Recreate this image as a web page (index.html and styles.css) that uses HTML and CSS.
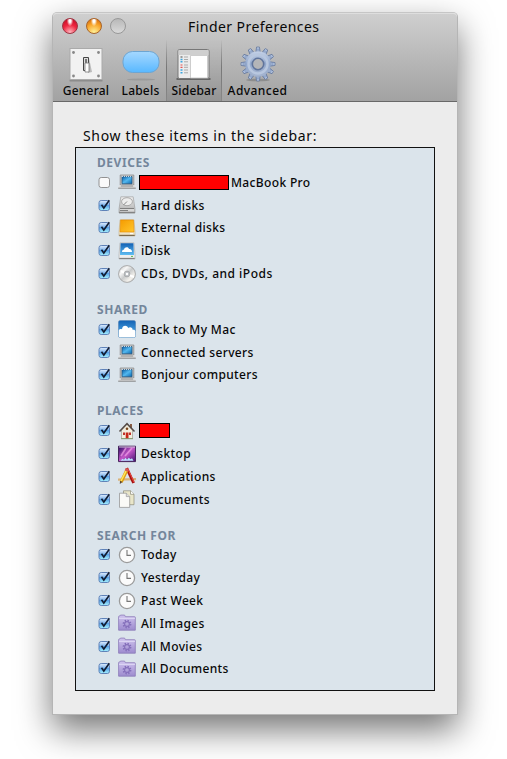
FILE: index.html
```html
<!DOCTYPE html>
<html lang="en">
<head>
<meta charset="utf-8">
<title>Finder Preferences</title>
<link rel="stylesheet" href="styles.css">
</head>
<body>
<svg class="defs" width="0" height="0" aria-hidden="true">
  <defs>
    <linearGradient id="gBox" x2="0" y2="1"><stop offset="0" stop-color="#e3efff"/><stop offset=".42" stop-color="#87b9ed"/><stop offset=".5" stop-color="#58a2e8"/><stop offset="1" stop-color="#a8f4ff"/></linearGradient>
    <linearGradient id="gScreen" x2="1" y2="1"><stop offset="0" stop-color="#075ca5"/><stop offset=".5" stop-color="#53b8ef"/><stop offset="1" stop-color="#0866ad"/></linearGradient>
    <linearGradient id="gMetal" x2="0" y2="1"><stop offset="0" stop-color="#eee"/><stop offset="1" stop-color="#aaa"/></linearGradient>
    <linearGradient id="gGold" x2="1" y2="1"><stop offset="0" stop-color="#f59b00"/><stop offset="1" stop-color="#ffc62c"/></linearGradient>
    <linearGradient id="gSky" x2="0" y2="1"><stop offset="0" stop-color="#1261b4"/><stop offset="1" stop-color="#60bdf2"/></linearGradient>
    <linearGradient id="gDisc" x2="1" y2="1"><stop offset="0" stop-color="#bbb"/><stop offset=".3" stop-color="#f7f7f7"/><stop offset=".5" stop-color="#c9cbcc"/><stop offset=".75" stop-color="#f5f3ee"/><stop offset="1" stop-color="#aaa"/></linearGradient>
    <linearGradient id="gDesk" x2="1" y2="1"><stop offset="0" stop-color="#26045f"/><stop offset=".5" stop-color="#c557c9"/><stop offset="1" stop-color="#41106f"/></linearGradient>
    <linearGradient id="gFolder" x2="0" y2="1"><stop offset="0" stop-color="#cfc3ee"/><stop offset="1" stop-color="#9d8bce"/></linearGradient>
    <linearGradient id="gLabel" x2="0" y2="1"><stop offset="0" stop-color="#a5d8ff"/><stop offset=".5" stop-color="#80c8ff"/><stop offset="1" stop-color="#58b8ff"/></linearGradient>
    <linearGradient id="gGear" x2="0" y2="1"><stop offset="0" stop-color="#c5d2e8"/><stop offset=".5" stop-color="#91a7cc"/><stop offset="1" stop-color="#a6b5cf"/></linearGradient>
    <symbol id="off" viewBox="0 0 13 13"><rect x="1" y="1.5" width="10.5" height="10" rx="2.2" fill="#fafafa" stroke="#929292"/></symbol>
    <symbol id="on" viewBox="0 0 13 13"><rect x="1" y="1.5" width="10.5" height="10" rx="2.2" fill="url(#gBox)" stroke="#5f82b8"/><path d="M3.5 5.8 5.8 9 11.3 1.2" fill="none" stroke="#111c32" stroke-width="1.6"/></symbol>
    <symbol id="laptop" viewBox="0 0 18 18"><path d="M2.2 2h13.6v10H2.2z" fill="#c7c7c7" stroke="#8a8a8a" stroke-width=".8"/><path d="M4 3.6h10v7.2H4z" fill="url(#gScreen)" stroke="#24557f" stroke-width=".8"/><path d="M4 3.4h10" stroke="#d7e4ed" stroke-width="1" stroke-dasharray="1 1"/><path d="M1.6 12h14.8l1.4 3H.2z" fill="#ddd"/><path d="M2.8 13h12.4" stroke="#888" stroke-width="1"/><path d="M.2 15.2h17.6" stroke="#858585"/></symbol>
    <symbol id="disk" viewBox="0 0 18 18"><path d="M2.8.8h12.4L17 13v4H1v-4z" fill="url(#gMetal)" stroke="#999" stroke-width=".6"/><ellipse cx="9" cy="5.7" rx="5.4" ry="4" fill="#eee" stroke="#999" stroke-width=".8"/><path d="M9 5.5 5.5 9" stroke="#888"/><path d="M1.8 12.5h14.4v3H1.8z" fill="#d8d8d8"/><path d="M2 12.5h14M2 14.5h8M1.2 16.7h15.6" stroke="#777" stroke-width=".9"/></symbol>
    <symbol id="external" viewBox="0 0 18 18"><path d="M2 .8h14L17 13v4H1v-4z" fill="#eee3c5" stroke="#bda577" stroke-width=".5"/><path d="M2.6 1h12.8l.6 12H2z" fill="url(#gGold)" stroke="#e68b00" stroke-width=".6"/><path d="M1.3 16.4h15.4" stroke="#7b6a4c" stroke-width="1.2"/><path d="M12 14.6h3" stroke="#fff"/></symbol>
    <symbol id="idisk" viewBox="0 0 18 18"><path d="M2 .8h14L17 13v4H1v-4z" fill="#eee" stroke="#aaa" stroke-width=".6"/><path d="M2.6 1.3h12.8l.6 11.7H2z" fill="url(#gSky)"/><path d="M4 10c0-2 1-2.4 2-2.3C6.5 5 10.3 4.4 11 7c2-.4 3 1.1 3 3z" fill="#fff"/><path d="M1.3 16.4h15.4" stroke="#777"/><path d="M13 14.4h2" stroke="#58b950"/></symbol>
    <symbol id="disc" viewBox="0 0 18 18"><circle cx="9" cy="9" r="8.4" fill="url(#gDisc)" stroke="#999" stroke-width=".8"/><path d="M3 6 7 8M11 10l5 2" stroke="#fff" stroke-width="2"/><circle cx="9" cy="9" r="2.9" fill="#bdc1c5" stroke="#999" stroke-width=".6"/><circle cx="9" cy="9" r="1.2" fill="#fff"/></symbol>
    <symbol id="cloud" viewBox="0 0 18 18"><rect x=".4" y=".4" width="17.2" height="17.2" rx="2" fill="url(#gSky)" stroke="#5a87b6" stroke-width=".6"/><path d="M.8 10.2C2 8.5 3.3 9 4 9.2 4.2 5.2 9 4.8 10.2 8c2-1.6 4.4-.4 4.5 2 1.2-.4 2.2.2 2.6 1v5q0 1.2-1.2 1.2H2Q.8 17.2.8 16z" fill="#fff"/></symbol>
    <symbol id="home" viewBox="0 0 18 18"><path d="M12 2h2v5h-2z" fill="#875c43"/><path d="M3.5 8 9 2l5.5 6v8.5h-11z" fill="#f2eedf" stroke="#888073" stroke-width=".5"/><path d="M1.5 9.5 9 1.7l7.5 7.8" fill="none" stroke="#554c48" stroke-width="1.5"/><circle cx="9" cy="6.8" r="1.3" fill="#79471c"/><path d="M5 10.5h2v2.5H5zm6 0h2v2.5h-2z" fill="#be332a"/><path d="M7.7 10.5h2.8v6H7.7z" fill="#c72818"/><path d="M3 16.7h12" stroke="#75925e" stroke-width=".8"/></symbol>
    <symbol id="desktop" viewBox="0 0 18 18"><path d="M.5 1.2h17v15.4H.5z" fill="url(#gDesk)" stroke="#46265c"/><path d="m3 11 5-8M7 11l7-8" stroke="#ec9be5" stroke-width="1.7" opacity=".75"/><path d="M1 2h16" stroke="#d8c9de"/><path d="m2.5 15.8 2-2 1.5 1 1.5-2 1.5 2 1.8-2 1.7 1.5 1.5-1 1.5 2.5z" fill="#b9e5ff"/></symbol>
    <symbol id="apps" viewBox="0 0 18 18"><path d="m0 12.6 18-.4" stroke="#d9b27a" stroke-width="2.2"/><path d="M8.7 1.2 15.6 16" stroke="#a51212" stroke-width="2.8"/><path d="m9.6 1.4 6.4 13.8" stroke="#ef4a3f" stroke-width="1"/><path d="M8.8 3.2 3.2 15" stroke="#df9d12" stroke-width="3.2"/><path d="M8.3 3.5 3 14" stroke="#ffe65a" stroke-width="1.6"/><path d="m8 4 1.2-2.4" stroke="#d65b57" stroke-width="3"/><path d="m2 13.8-.2 3.3 2.7-2" fill="#5c4630"/></symbol>
    <symbol id="docs" viewBox="0 0 18 18"><path d="M5.5.8h7L16 4.2v10.5H5.5z" fill="#e9e6c9" stroke="#8c8a78" stroke-width=".7"/><path d="M12.5.8v3.5H16" fill="#fff" stroke="#8c8a78" stroke-width=".7"/><path d="M1.5 3.2h6.8l3.4 3.4v10.8H1.5z" fill="#fafaf7" stroke="#8c8c8c" stroke-width=".7"/><path d="M8.3 3.2v3.4h3.4" fill="#ddd" stroke="#999" stroke-width=".7"/></symbol>
    <symbol id="clock" viewBox="0 0 18 18"><circle cx="9" cy="9" r="7.6" fill="#fbfbfb" stroke="#9b9b9b" stroke-width="1.3"/><path d="M9 4v5.4h4" fill="none" stroke="#777" stroke-width="1.1"/></symbol>
    <symbol id="smart" viewBox="0 0 18 18"><path d="M.6 16.2V2.8q0-.8.8-.8h.4l.6-.9h4.2l.8 1.6h9.1q.8 0 .8.8v12.7z" fill="url(#gFolder)" stroke="#8b7bb8" stroke-width=".8"/><path d="M1 4.3h16" stroke="#e2dcf7"/><circle cx="9" cy="10" r="3.4" fill="none" stroke="#8570bb" stroke-width="2" stroke-dasharray="1.4 1.27"/><circle cx="9" cy="10" r="2.4" fill="none" stroke="#8570bb" stroke-width="1.1"/></symbol>
  </defs>
</svg>
<main class="window">
  <header class="chrome">
    <div class="titlebar">
      <div class="lights"><i class="light close"></i><i class="light minimize"></i><i class="light disabled"></i></div>
      <h1 class="title"><span>Finder Preferences</span></h1>
    </div>
    <nav class="toolbar">
      <div class="tool general">
        <svg width="38" height="38" viewBox="0 0 38 38"><path d="M2.5 35.5h33" stroke="#777" stroke-width="2" opacity=".6"/><rect x="3" y="3.5" width="32" height="31" fill="#f2f2f2" stroke="#aaa"/><g fill="#888"><circle cx="6.5" cy="7.5" r="1.4"/><circle cx="31.5" cy="7.5" r="1.4"/><circle cx="6.5" cy="31" r="1.4"/><circle cx="31.5" cy="31" r="1.4"/></g><path d="m22 13 3 14-4 1z" fill="#bbb"/><path d="M16.5 12.5h5v13h-5z" fill="#ddd" stroke="#444"/><path d="M18 18h4v9h-4z" fill="#fff" stroke="#777" stroke-width=".8"/><path d="M18 14h2v4h-2z" fill="#777"/></svg>
        <span>General</span>
      </div>
      <div class="tool labels">
        <svg width="38" height="38" viewBox="0 0 38 38"><ellipse cx="19" cy="34.5" rx="14" ry="1" fill="#777" opacity=".35"/><rect x="1" y="6.5" width="36" height="21" rx="9.5" fill="url(#gLabel)" stroke="#6da5d2" stroke-width="1"/></svg>
        <span>Labels</span>
      </div>
      <div class="tool sidebar">
        <svg width="38" height="38" viewBox="0 0 38 38"><path d="M1.5 33h34v2h-34z" fill="#666"/><rect x="3" y="4.5" width="31" height="29" rx="1.5" fill="#ececec" stroke="#777"/><path d="M3.5 5h30v5h-30z" fill="#cfcfcf"/><path d="M15.5 10.5h17V33h-17z" fill="#fff" stroke="#bbb" stroke-width=".7"/><path d="M5.5 12h2" stroke="#666" stroke-width="1.2"/><path d="M5.5 20h2m-2 2.3h2" stroke="#df5555" stroke-width="1.2"/><path d="M5.5 14.5h2m-2 2.3h2M5.5 25h2m-2 2.8h2" stroke="#3da6df" stroke-width="1.4"/><path d="M9 12h4m-4 2.5h4m-4 2.3h4M9 20h4m-4 2.3h4m-4 2.7h4m-4 2.8h4" stroke="#aaa"/></svg>
        <span>Sidebar</span>
      </div>
      <div class="tool advanced">
        <svg width="38" height="38" viewBox="0 0 38 38"><ellipse cx="19" cy="35" rx="12" ry="1.3" fill="#666" opacity=".45"/><g fill="url(#gGear)" stroke="#66799d" stroke-width=".8"><path id="tooth" d="m16.8 7 .8-5h2.8l.8 5z"/><use href="#tooth" transform="rotate(30 19 19)"/><use href="#tooth" transform="rotate(60 19 19)"/><use href="#tooth" transform="rotate(90 19 19)"/><use href="#tooth" transform="rotate(120 19 19)"/><use href="#tooth" transform="rotate(150 19 19)"/><use href="#tooth" transform="rotate(180 19 19)"/><use href="#tooth" transform="rotate(210 19 19)"/><use href="#tooth" transform="rotate(240 19 19)"/><use href="#tooth" transform="rotate(270 19 19)"/><use href="#tooth" transform="rotate(300 19 19)"/><use href="#tooth" transform="rotate(330 19 19)"/></g><circle cx="19" cy="19" r="12.8" fill="url(#gGear)"/><circle cx="19" cy="19" r="9.5" fill="none" stroke="#b8c7df" stroke-width="2.5"/><circle cx="19" cy="19" r="5.7" fill="#b4b5b8" stroke="#60749b" stroke-width="1.6"/></svg>
        <span>Advanced</span>
      </div>
    </nav>
  </header>
  <section class="content">
    <p class="prompt"><span>Show these items in the sidebar:</span></p>
    <div class="list">
      <h2>DEVICES</h2>
      <div class="row"><svg class="check"><use href="#off"/></svg><svg class="icon"><use href="#laptop"/></svg><b class="redacted wide"></b><span>MacBook Pro</span></div>
      <div class="row"><svg class="check"><use href="#on"/></svg><svg class="icon"><use href="#disk"/></svg><span>Hard disks</span></div>
      <div class="row"><svg class="check"><use href="#on"/></svg><svg class="icon"><use href="#external"/></svg><span>External disks</span></div>
      <div class="row"><svg class="check"><use href="#on"/></svg><svg class="icon"><use href="#idisk"/></svg><span>iDisk</span></div>
      <div class="row media"><svg class="check"><use href="#on"/></svg><svg class="icon"><use href="#disc"/></svg><span>CDs, DVDs, and iPods</span></div>
      <h2>SHARED</h2>
      <div class="row"><svg class="check"><use href="#on"/></svg><svg class="icon"><use href="#cloud"/></svg><span>Back to My Mac</span></div>
      <div class="row"><svg class="check"><use href="#on"/></svg><svg class="icon"><use href="#laptop"/></svg><span>Connected servers</span></div>
      <div class="row"><svg class="check"><use href="#on"/></svg><svg class="icon"><use href="#laptop"/></svg><span>Bonjour computers</span></div>
      <h2>PLACES</h2>
      <div class="row"><svg class="check"><use href="#on"/></svg><svg class="icon"><use href="#home"/></svg><b class="redacted"></b></div>
      <div class="row"><svg class="check"><use href="#on"/></svg><svg class="icon"><use href="#desktop"/></svg><span>Desktop</span></div>
      <div class="row"><svg class="check"><use href="#on"/></svg><svg class="icon"><use href="#apps"/></svg><span>Applications</span></div>
      <div class="row"><svg class="check"><use href="#on"/></svg><svg class="icon"><use href="#docs"/></svg><span>Documents</span></div>
      <h2>SEARCH FOR</h2>
      <div class="row"><svg class="check"><use href="#on"/></svg><svg class="icon"><use href="#clock"/></svg><span>Today</span></div>
      <div class="row"><svg class="check"><use href="#on"/></svg><svg class="icon"><use href="#clock"/></svg><span>Yesterday</span></div>
      <div class="row"><svg class="check"><use href="#on"/></svg><svg class="icon"><use href="#clock"/></svg><span>Past Week</span></div>
      <div class="row"><svg class="check"><use href="#on"/></svg><svg class="icon"><use href="#smart"/></svg><span>All Images</span></div>
      <div class="row"><svg class="check"><use href="#on"/></svg><svg class="icon"><use href="#smart"/></svg><span>All Movies</span></div>
      <div class="row"><svg class="check"><use href="#on"/></svg><svg class="icon"><use href="#smart"/></svg><span>All Documents</span></div>
    </div>
  </section>
</main>
</body>
</html>
```
FILE: styles.css
```css
* { box-sizing: border-box; }
body {
  margin: 0;
  height: 759px;
  padding: 12px 49px 0 52px;
  overflow: hidden;
  background: #fff;
  color: #080808;
  font-family: "Noto Sans", "Open Sans", sans-serif;
}
.defs { position: absolute; }
h1, h2, p { margin: 0; font-weight: 400; }
.window {
  width: 406px;
  height: 703px;
  border: 1px solid #b5b5b5;
  border-top-color: #c6c6c6;
  border-radius: 5px 5px 0 0;
  background: #ececec;
  box-shadow: 0 15px 34px rgba(0, 0, 0, .54);
}
.chrome {
  height: 89px;
  border-top: 1px solid #dedede;
  border-bottom: 1px solid #686868;
  border-radius: 4px 4px 0 0;
  background: linear-gradient(#cfcfcf, #a2a2a2);
}
.titlebar { display: flex; height: 26px; align-items: center; }
.lights { display: flex; width: 135px; padding-left: 9px; gap: 8px; margin-top: -2px; }
.light { width: 16px; height: 16px; border-radius: 50%; border: 1px solid #777; }
.close { border-color: #9d3442; background: radial-gradient(ellipse at 50% 12%, #fff 0 10%, transparent 32%), radial-gradient(circle at 50% 95%, #ffb8c0, #ee2740 50%, #b90620); }
.minimize { border-color: #a7642c; background: radial-gradient(ellipse at 50% 12%, #fff 0 10%, transparent 32%), radial-gradient(circle at 50% 95%, #fff39b, #f8a52b 55%, #cc5a00); }
.disabled { border-color: #989898; background: linear-gradient(#b8b8b8, #d9d9d9); }
.title { font-size: 14px; line-height: 24px; margin-top: -1px; letter-spacing: .45px; white-space: nowrap; }
.toolbar { display: flex; height: 61px; }
.tool { display: flex; flex-direction: column; align-items: center; height: 61px; padding-top: 5px; font-size: 12px; font-weight: 500; letter-spacing: .2px; white-space: nowrap; }
.tool svg { flex: none; }
.tool span { line-height: 16px; }
.general { width: 66px; }
.labels { width: 43px; margin-right: 4px; }
.sidebar {
  width: 56px;
  border: 1px solid;
  border-width: 0 1px;
  border-image: linear-gradient(transparent, #777 45%, #888) 1;
  background: linear-gradient(rgba(0,0,0,0), rgba(0,0,0,.09));
}
.advanced { width: 71px; letter-spacing: .45px; }
.content { padding: 24px 22px 0; }
.prompt { height: 21px; padding-left: 8px; font-size: 14px; line-height: 20px; letter-spacing: .66px; white-space: nowrap; }
.list { width: 360px; height: 544px; padding: 6px 0 0 21px; border: 1px solid #111; background: #dbe4eb; }
.list h2 { height: 33px; padding-top: 16px; font-size: 12px; font-weight: 700; line-height: 17px; letter-spacing: .55px; color: #74869b; }
.list h2:first-child { height: 17px; padding-top: 0; }
.row { display: flex; align-items: center; height: 22.8px; font-size: 12px; font-weight: 500; letter-spacing: .35px; white-space: nowrap; }
.media { letter-spacing: .5px; }
.check { width: 13px; height: 13px; margin: 0 7px 0 1px; }
.icon { width: 18px; height: 18px; margin-right: 5px; }
.redacted { width: 31px; height: 15px; margin-left: -2px; border: 1px solid #000; background: #f00; }
.wide { width: 90px; margin-right: 2px; }
```
